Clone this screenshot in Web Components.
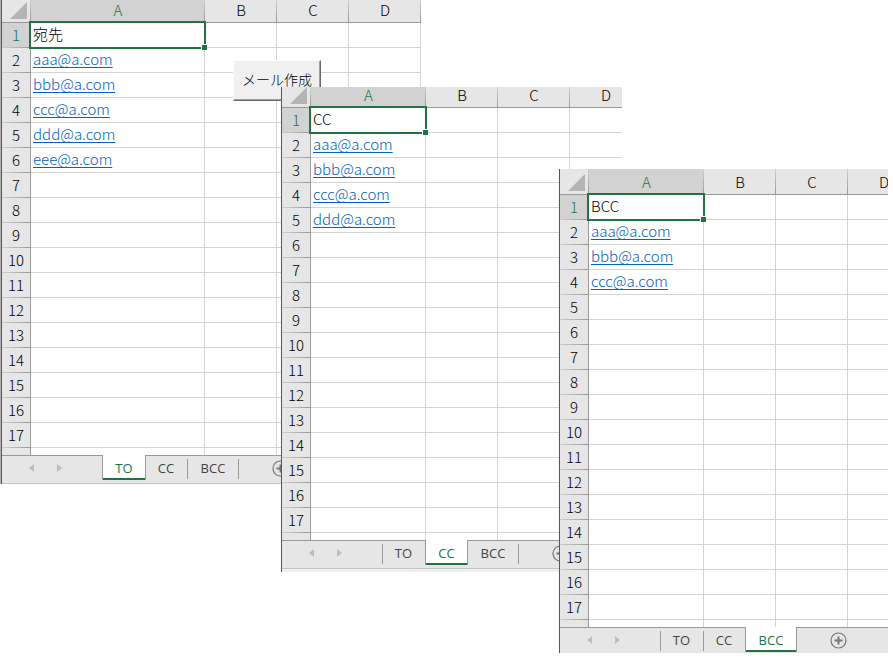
<!DOCTYPE html>
<html lang="ja">
<head>
<meta charset="utf-8">
<meta name="viewport" content="width=device-width, initial-scale=1">
<title>メール作成</title>
<style>
  html, body { margin: 0; height: 100%; }
  body { background: #fff; font-family: "Noto Sans CJK JP", sans-serif; }
</style>
</head>
<body>
<sheet-desktop>
  <sheet-window style="left:1px;top:0;width:421px;height:484px;--head:23px;--col-a:174px;--edge:#b4b4b4"
    heading="宛先" people="aaa bbb ccc ddd eee" active="TO">
    <macro-button>メール作成</macro-button>
  </sheet-window>
  <sheet-window style="left:281px;top:87px;width:341px;height:485px;--head:21px;--foot:3px"
    heading="CC" people="aaa bbb ccc ddd" active="CC"></sheet-window>
  <sheet-window style="left:559px;top:169px;right:5px;height:484px;--head:26px;--tabs:26px;--base:#e6e6e6"
    heading="BCC" people="aaa bbb ccc" active="BCC"></sheet-window>
</sheet-desktop>

<script>
customElements.define('sheet-desktop', class extends HTMLElement {
  constructor() {
    super();
    this.attachShadow({ mode: 'open' }).innerHTML = `
      <style>
        :host { display: block; position: relative; min-height: 100%; overflow: hidden; }
      </style>
      <slot></slot>`;
  }
});

customElements.define('macro-button', class extends HTMLElement {
  constructor() {
    super();
    this.attachShadow({ mode: 'open' }).innerHTML = `
      <style>
        :host { display: block; position: absolute; left: 231px; top: 60px; }
        button {
          display: block; height: 41px; padding: 0 8px 4px; white-space: nowrap;
          font: 300 14px/24px "Noto Sans CJK JP", sans-serif; color: #000;
          background: #f0f0f0; border: 1px solid; border-radius: 0;
          border-color: #fff #696969 #696969 #fff;
          box-shadow: inset -1px -1px #a0a0a0;
        }
      </style>
      <button type="button"><slot></slot></button>`;
  }
});

customElements.define('sheet-grid', class extends HTMLElement {
  connectedCallback() {
    const heading = this.getAttribute('heading');
    const people = this.getAttribute('people').split(' ');
    const columns = ['A', 'B', 'C', 'D'];
    const value = row => {
      if (row === 1) return heading;
      const name = people[row - 2];
      return name ? `<a href="mailto:${name}@a.com">${name}@a.com</a>` : '';
    };
    const rows = Array.from({ length: 18 }, (_, i) => i + 1).map(row => `
      <tr><th scope="row" class="${row === 1 ? 'on' : ''}">${row}</th>
      <td class="${row === 1 ? 'selected' : ''}">${value(row)}</td><td></td><td></td><td></td></tr>`).join('');
    this.attachShadow({ mode: 'open' }).innerHTML = `
      <style>
        :host { display: block; overflow: hidden; }
        table { table-layout: fixed; width: 0; border-collapse: separate; border-spacing: 0;
          font-size: 15px; font-weight: 300; line-height: 22px; color: #000; }
        col { width: 72px; }
        col.index { width: 29px; }
        col.a { width: var(--col-a, 115px); }
        th, td { box-sizing: border-box; height: 25px; padding: 0 0 2px; white-space: nowrap; font-weight: 300; }
        th { background: #e6e6e6; text-align: center; }
        thead th { height: var(--head); line-height: 16px; vertical-align: bottom; padding-bottom: 4px;
          border-bottom: 1px solid #999;
          background: linear-gradient(#d0d0d0, #999) right / 1px 100% no-repeat #e6e6e6; }
        tbody th { border-right: 1px solid #999;
          background: linear-gradient(90deg, #d0d0d0, #999) bottom / 100% 1px no-repeat #e6e6e6; }
        th.on { background-color: #d2d2d2; color: #217346; }
        thead th.corner { padding: 0 4px 3px 0; line-height: 0; text-align: right; }
        td { position: relative; padding-left: 2px; border-right: 1px solid #d4d4d4; border-bottom: 1px solid #d4d4d4; }
        td.selected { z-index: 1; }
        td.selected::before { content: ""; position: absolute; inset: -2px; border: 2px solid #217346; }
        td.selected::after { content: ""; position: absolute; right: -3px; bottom: -3px; width: 5px; height: 5px;
          background: #217346; border: 1px solid #fff; border-width: 1px 0 0 1px; }
        a { color: #0563c1; text-decoration: underline 1px; text-underline-offset: 2px; text-decoration-skip-ink: none; }
        svg { display: inline-block; }
      </style>
      <table>
        <colgroup><col class="index"><col class="a"><col><col><col></colgroup>
        <thead><tr>
          <th class="corner"><svg width="17" height="17" viewBox="0 0 17 17" aria-hidden="true"><path d="M17 0V17H0Z" fill="#b4b4b4"/></svg></th>
          ${columns.map(c => `<th scope="col" class="${c === 'A' ? 'on' : ''}">${c}</th>`).join('')}
        </tr></thead>
        <tbody>${rows}</tbody>
      </table>`;
  }
});

customElements.define('sheet-tabs', class extends HTMLElement {
  connectedCallback() {
    const active = this.getAttribute('active');
    const names = ['TO', 'CC', 'BCC'];
    const tabs = names.map(n => `<button type="button" role="tab" aria-selected="${n === active}">${n}</button>`).join('');
    this.attachShadow({ mode: 'open' }).innerHTML = `
      <style>
        :host { display: flex; box-sizing: border-box; height: var(--tabs, 29px); overflow: hidden;
          background: linear-gradient(#999, #999) top / 100% 1px no-repeat #e6e6e6;
          box-shadow: inset 0 -1px var(--base, #c3c3c3); }
        button { font: 13px/24px "Open Sans", sans-serif; color: #444; background: none; border: 0; border-radius: 0; padding: 0; }
        nav { display: flex; box-sizing: border-box; width: 100px; padding-left: 23px; gap: 16px; align-items: flex-start; }
        nav button { width: 12px; height: 26px; display: grid; place-items: center; }
        [role=tablist] { display: flex; }
        [role=tab] { position: relative; box-sizing: border-box; width: 43px; height: 25px; padding-top: 1px; text-align: center; }
        [role=tab]:nth-child(2) { width: 42px; }
        [role=tab]:last-child { width: 52px; }
        [role=tab]::before, [role=tab]:last-child::after { content: ""; position: absolute; left: 0; top: 4px; height: 20px; width: 1px; background: #999; }
        [role=tab]:last-child::after { left: auto; right: 0; }
        [aria-selected=true] { background: #fff; color: #217346; border-left: 1px solid #999; box-shadow: inset 0 -2px #217346; }
        [aria-selected=true]:last-child { border-right: 1px solid #999; }
        [role=tab][aria-selected=true]::before, [role=tab][aria-selected=true]::after { display: none; }
        [aria-selected=true] + [role=tab]::before { top: 0; height: 25px; }
        .add { margin-left: 32px; width: 18px; height: 27px; display: grid; place-items: center; flex: none; }
        svg { display: block; }
      </style>
      <nav>
        <button type="button" aria-label="前のシート"><svg width="5" height="8" viewBox="0 0 5 8"><path d="M5 0V8L0 4Z" fill="#bdbdbd"/></svg></button>
        <button type="button" aria-label="次のシート"><svg width="5" height="8" viewBox="0 0 5 8"><path d="M0 0V8L5 4Z" fill="#bdbdbd"/></svg></button>
      </nav>
      <div role="tablist">${tabs}</div>
      <button class="add" type="button" aria-label="新しいシート"><svg width="17" height="17" viewBox="0 0 17 17"><circle cx="8.5" cy="8.5" r="7.5" fill="none" stroke="#777" stroke-width="1.2"/><path d="M8.5 4.5v8M4.5 8.5h8" stroke="#777" stroke-width="2"/></svg></button>`;
  }
});

customElements.define('sheet-window', class extends HTMLElement {
  connectedCallback() {
    const attr = n => this.getAttribute(n);
    this.attachShadow({ mode: 'open' }).innerHTML = `
      <style>
        :host { position: absolute; box-shadow: -1px 0 var(--edge, transparent); }
        .frame { height: 100%; display: flex; flex-direction: column; box-sizing: border-box; overflow: hidden;
          position: relative; background: #fff; border-left: 1px solid #217346; }
        sheet-grid { flex: 1; min-height: 0; }
        sheet-tabs { flex: none; }
        .foot { height: var(--foot, 0); background: #f0f0f0; }
      </style>
      <div class="frame">
        <sheet-grid heading="${attr('heading')}" people="${attr('people')}"></sheet-grid>
        <sheet-tabs active="${attr('active')}"></sheet-tabs>
        <div class="foot"></div>
        <slot></slot>
      </div>`;
  }
});
</script>
</body>
</html>
